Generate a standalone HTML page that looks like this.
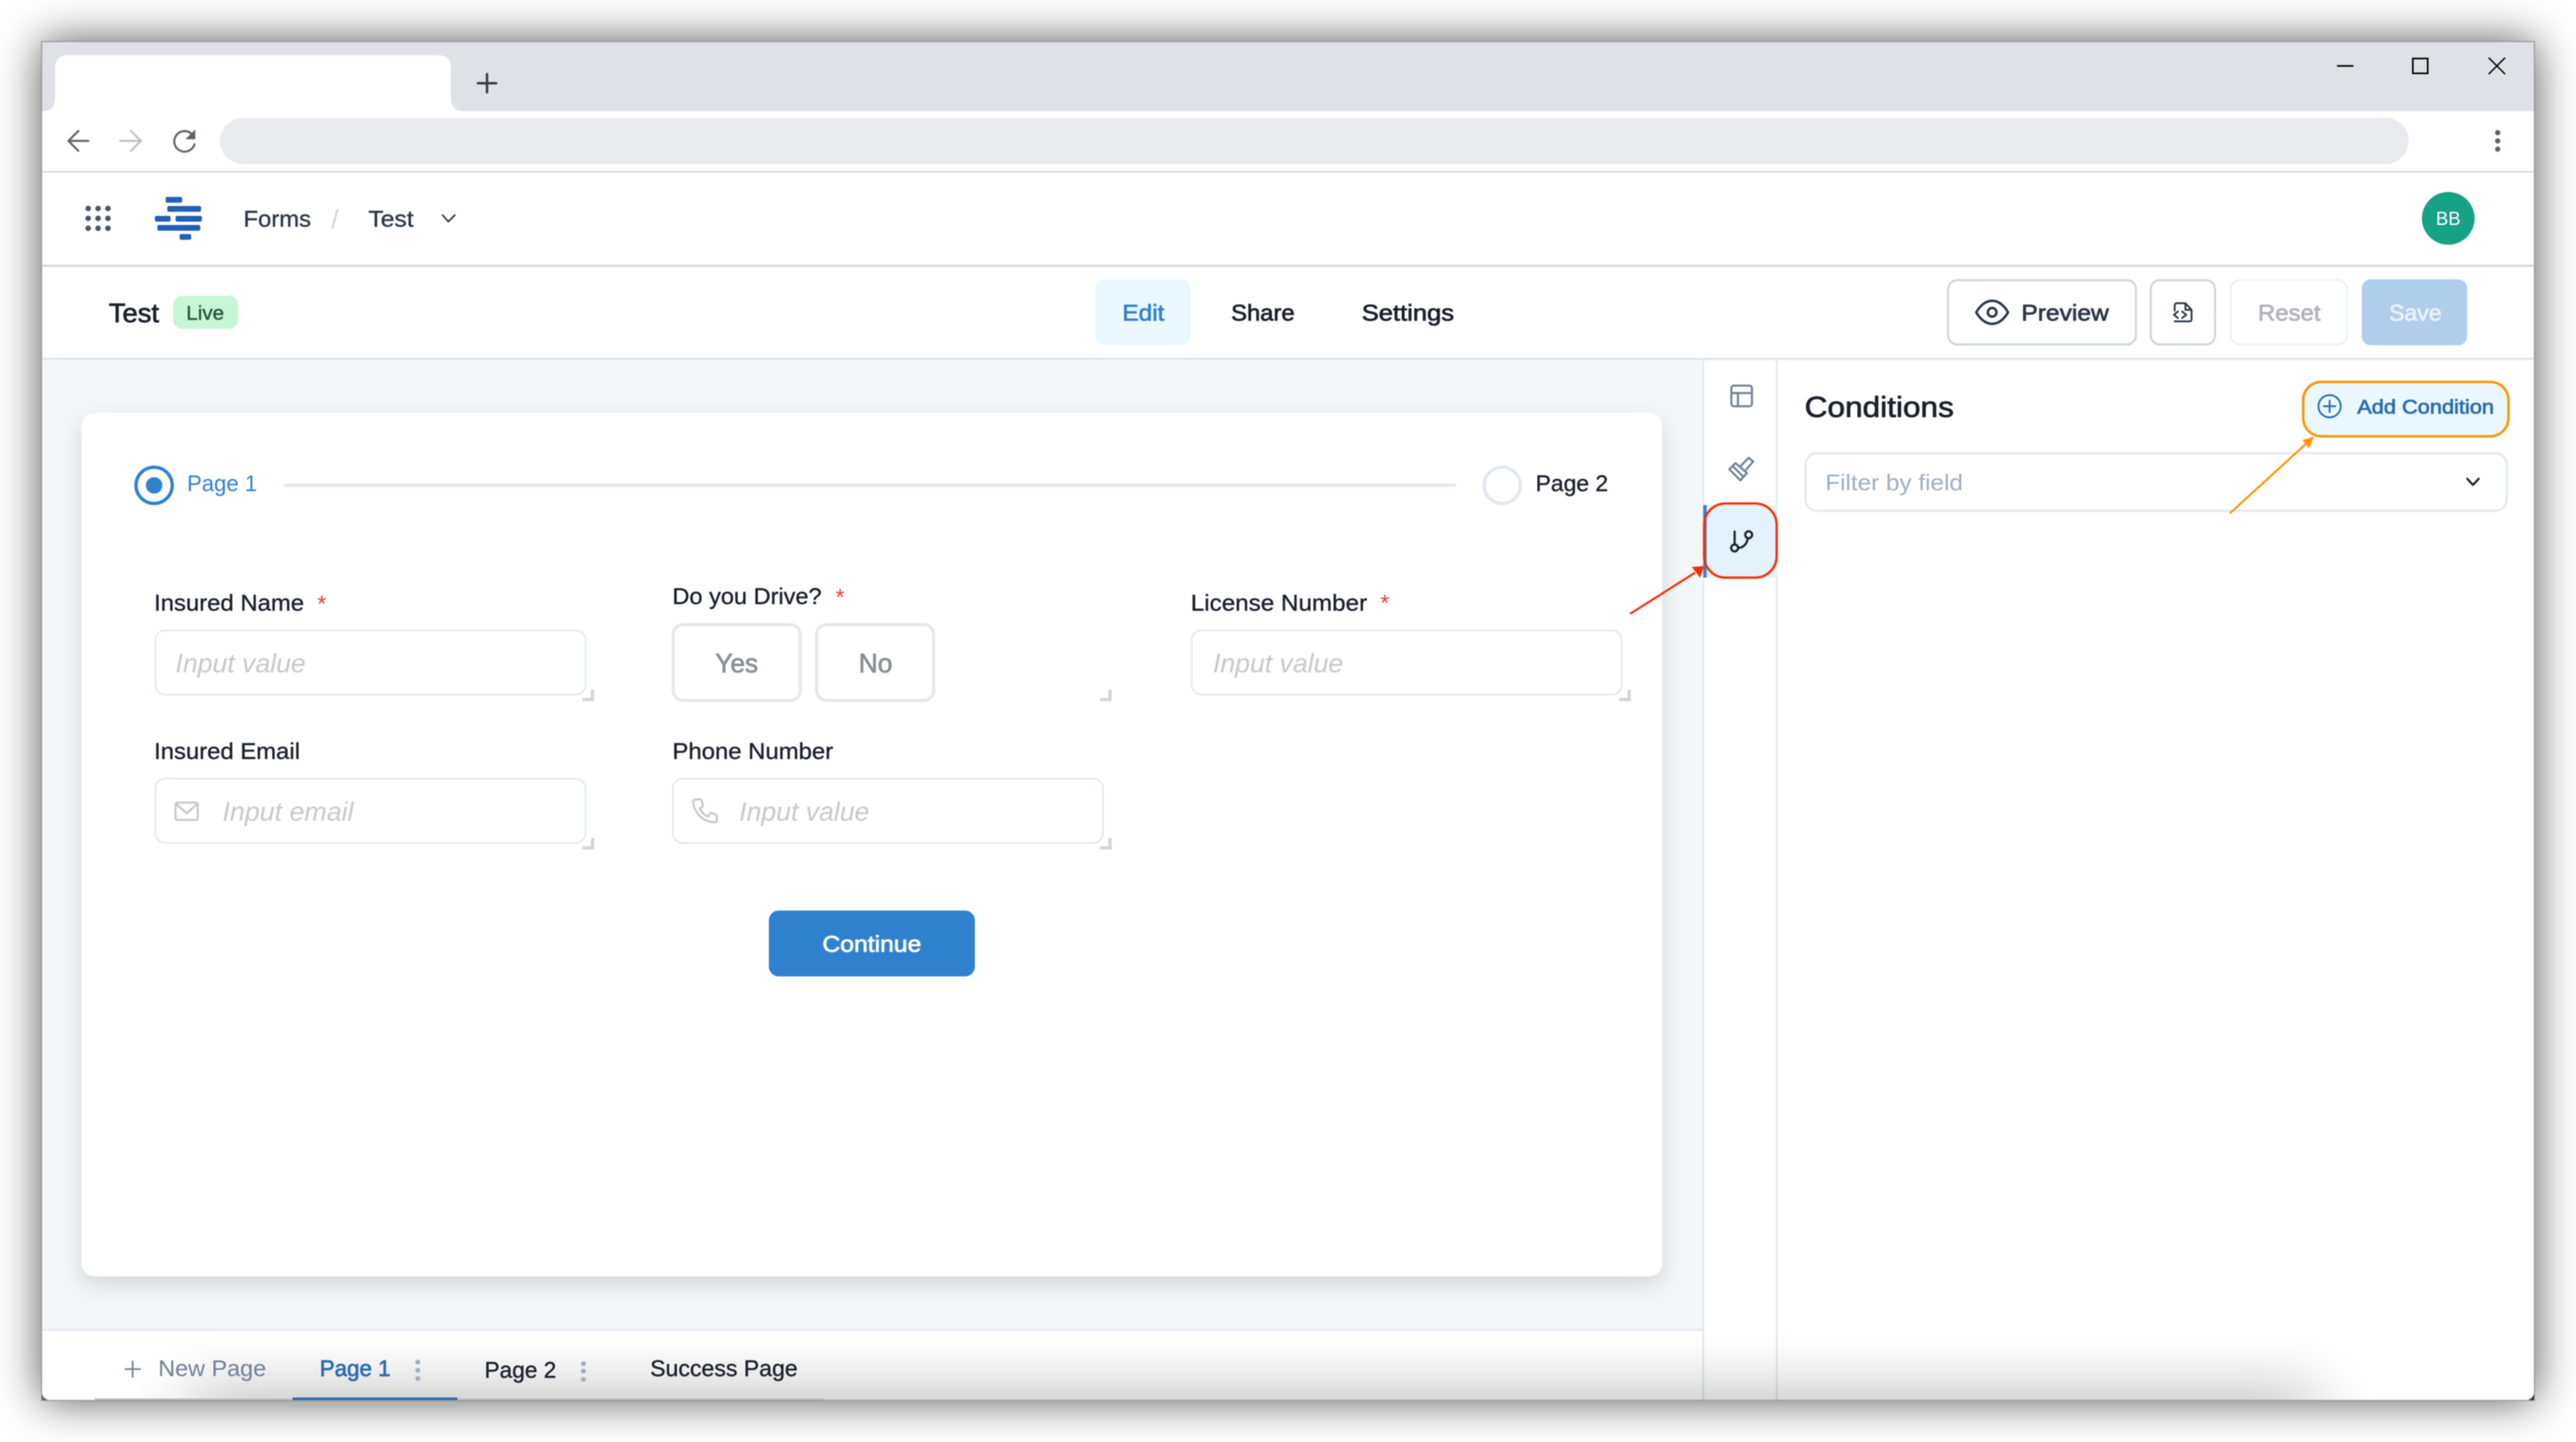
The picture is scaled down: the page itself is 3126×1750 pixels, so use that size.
<!DOCTYPE html>
<html lang="en">
<head>
<meta charset="utf-8">
<title>Forms - Conditions</title>
<style>
html,body{margin:0;padding:0;width:3126px;height:1750px;background:#fff;overflow:hidden}
.win{position:absolute;left:50px;top:50px;width:3026px;height:1650px;box-shadow:0 0 50px rgba(0,0,0,.66)}
svg{position:absolute;left:0;top:0;filter:blur(.4px)}
text{font-family:"Liberation Sans",Arial,sans-serif;fill:currentColor;stroke:currentColor;stroke-width:0}
.m{stroke-width:.4px}
.s{stroke-width:.8px}
.ph{font-style:italic;font-size:32px;color:#c9c9c9}
.i{fill:none;stroke-linecap:round;stroke-linejoin:round}
</style>
</head>
<body>
<div class="win"></div>
<svg width="3126" height="1750" viewBox="0 0 3126 1750" xmlns="http://www.w3.org/2000/svg">
<defs>
<filter id="sb" x="-10%" y="-400%" width="120%" height="900%"><feGaussianBlur stdDeviation="40"/></filter>
<filter id="cs" x="-5%" y="-5%" width="110%" height="110%"><feGaussianBlur stdDeviation="14"/></filter>
<clipPath id="wc"><rect x="51" y="51" width="3024" height="1648"/></clipPath>
</defs>

<!-- window base -->
<rect x="50" y="50" width="3026" height="1650" fill="#fff"/>

<!-- tab strip -->
<rect x="51" y="51" width="3024" height="84" fill="#dee1e6"/>
<path d="M51 135Q67 135 67 119V83Q67 67 83 67H531Q547 67 547 83V119Q547 135 563 135Z" fill="#fff"/>
<path class="i" d="M591 90V112M580 101H602" stroke="#3c4043" stroke-width="3"/>
<path d="M2836 80H2856" stroke="#000" stroke-width="2"/>
<rect x="2928" y="71" width="18" height="18" fill="none" stroke="#000" stroke-width="2"/>
<path d="M3020 70L3040 90M3040 70L3020 90" stroke="#000" stroke-width="1.6"/>

<!-- browser toolbar -->
<rect x="267" y="143" width="2656" height="56" rx="28" fill="#e8eaed"/>
<path class="i" d="M107 171H84M95 159L83 171L95 183" stroke="#5f6368" stroke-width="2.5"/>
<path class="i" d="M146 171H170M159 159L171 171L159 183" stroke="#bdc1c6" stroke-width="2.5"/>
<path class="i" d="M232 162A12.5 12.500 0 1 0 236 175" stroke="#5f6368" stroke-width="2.5"/>
<path d="M237 157V169H225Z" fill="#5f6368"/>
<circle cx="3031" cy="161" r="3.2" fill="#5f6368"/><circle cx="3031" cy="171" r="3.2" fill="#5f6368"/><circle cx="3031" cy="181" r="3.2" fill="#5f6368"/>
<rect x="51" y="208" width="3024" height="1" fill="#b4b4b4"/>

<!-- app header -->
<g fill="#4a5568">
<circle cx="107" cy="253" r="3.4"/><circle cx="119" cy="253" r="3.4"/><circle cx="131" cy="253" r="3.4"/>
<circle cx="107" cy="265" r="3.4"/><circle cx="119" cy="265" r="3.4"/><circle cx="131" cy="265" r="3.4"/>
<circle cx="107" cy="277" r="3.4"/><circle cx="119" cy="277" r="3.4"/><circle cx="131" cy="277" r="3.4"/>
</g>
<g fill="#2260b4">
<rect x="201" y="239" width="20" height="7" rx="2"/>
<rect x="203" y="250" width="41" height="7" rx="2"/>
<rect x="188" y="262" width="19" height="7" rx="2"/>
<rect x="213" y="262" width="32" height="7" rx="2"/>
<rect x="191" y="273" width="52" height="7" rx="2"/>
<rect x="218" y="284" width="14" height="7" rx="2"/>
</g>
<text x="295.500" y="275" font-size="28" textLength="82" lengthAdjust="spacingAndGlyphs" class="m" color="#2d3748">Forms</text>
<text x="402" y="277" font-size="32" color="#cbd5e0">/</text>
<text x="447" y="275" font-size="28" textLength="55" lengthAdjust="spacingAndGlyphs" class="m" color="#2d3748">Test</text>
<path class="i" d="M537 261L544 269L552 261" stroke="#2d3748" stroke-width="2"/>
<circle cx="2971" cy="265" r="32" fill="#17a185"/>
<text x="2956" y="273" font-size="23" textLength="30" lengthAdjust="spacingAndGlyphs" color="#fff">BB</text>
<rect x="51" y="321" width="3024" height="3" fill="#d5dae3"/>

<!-- form toolbar -->
<text x="132" y="391" font-size="32" textLength="61" lengthAdjust="spacingAndGlyphs" class="s" color="#1a202c">Test</text>
<rect x="210" y="359" width="79" height="40" rx="11" fill="#c6f6d5"/>
<text x="226" y="388" font-size="24" textLength="46" lengthAdjust="spacingAndGlyphs" class="m" color="#22543d">Live</text>
<rect x="1329" y="339" width="116" height="80" rx="12" fill="#ebf8ff"/>
<text x="1362" y="389" font-size="28" textLength="51" lengthAdjust="spacingAndGlyphs" class="s" color="#3182ce">Edit</text>
<text x="1494" y="389" font-size="28" textLength="77" lengthAdjust="spacingAndGlyphs" class="s" color="#1a202c">Share</text>
<text x="1652.500" y="389" font-size="28" textLength="112" lengthAdjust="spacingAndGlyphs" class="s" color="#1a202c">Settings</text>

<rect x="2364" y="340" width="228" height="78" rx="11" fill="#fff" stroke="#cbd5e0" stroke-width="2.5"/>
<g transform="translate(2396.5 358) scale(1.75)" class="i" stroke="#2d3748" stroke-width="1.75"><path d="M1 12s4-8 11-8 11 8 11 8-4 8-11 8-11-8-11-8z"/><circle cx="12" cy="12" r="3"/></g>
<text x="2453" y="389" font-size="28" textLength="106" lengthAdjust="spacingAndGlyphs" class="s" color="#2d3748">Preview</text>
<rect x="2610" y="340" width="78" height="78" rx="11" fill="#fff" stroke="#cbd5e0" stroke-width="2.5"/>
<path class="i" stroke="#2d3748" stroke-width="2.2" d="M2639 377V371Q2639 368 2642 368H2652L2659.5 376V387Q2659.5 390 2657 390H2639M2652 368V376H2659.5M2643 378L2638 382L2643 386M2648 378L2653 382L2648 386"/>
<rect x="2707" y="340" width="141" height="78" rx="11" fill="#fff" stroke="#edf2f7" stroke-width="2.5"/>
<text x="2740" y="389" font-size="28" textLength="76" lengthAdjust="spacingAndGlyphs" class="s" color="#b0b3bb">Reset</text>
<rect x="2866" y="339" width="128" height="80" rx="11" fill="#b0cdeb"/>
<text x="2899" y="389" font-size="28" textLength="64" lengthAdjust="spacingAndGlyphs" class="s" color="#eaf2fb">Save</text>
<rect x="51" y="434" width="3024" height="3" fill="#e2e8f0"/>

<!-- canvas -->
<rect x="51" y="437" width="2015" height="1176" fill="#f4f7fa"/>
<rect x="99" y="512" width="1918" height="1048" rx="16" fill="#000" opacity=".13" filter="url(#cs)"/>
<rect x="99" y="501" width="1918" height="1048" rx="16" fill="#fff"/>

<!-- stepper -->
<circle cx="187" cy="589" r="22" fill="#fff" stroke="#3182ce" stroke-width="4"/>
<circle cx="187" cy="589" r="10" fill="#3182ce"/>
<text x="227" y="596" font-size="28" textLength="85" lengthAdjust="spacingAndGlyphs" color="#3182ce">Page 1</text>
<rect x="345" y="587" width="1422" height="4" fill="#e2e8f0"/>
<circle cx="1823" cy="589" r="22" fill="#fff" stroke="#e2e8f0" stroke-width="4"/>
<text x="1863.500" y="596" font-size="28" textLength="88" lengthAdjust="spacingAndGlyphs" class="m" color="#1a202c">Page 2</text>

<!-- fields -->
<text x="187" y="741" font-size="28" textLength="182" lengthAdjust="spacingAndGlyphs" class="m" color="#1a202c">Insured Name</text>
<text x="385" y="742" font-size="28" color="#e53e3e">*</text>
<rect x="188.500" y="765" width="522" height="78" rx="12" fill="#fff" stroke="#e2e8f0" stroke-width="2"/>
<text x="213" y="816" textLength="158" lengthAdjust="spacingAndGlyphs" class="ph">Input value</text>
<path d="M719 837V849H707" fill="none" stroke="#d5d5d5" stroke-width="4"/>

<text x="816" y="733" font-size="28" textLength="181" lengthAdjust="spacingAndGlyphs" class="m" color="#1a202c">Do you Drive?</text>
<text x="1014" y="734" font-size="28" color="#e53e3e">*</text>
<rect x="817" y="758" width="154" height="92" rx="12" fill="#fff" stroke="#e8e8e8" stroke-width="4"/>
<text x="868" y="816" font-size="32" textLength="52" lengthAdjust="spacingAndGlyphs" class="s" color="#8c8e94">Yes</text>
<rect x="991" y="758" width="142" height="92" rx="12" fill="#fff" stroke="#e8e8e8" stroke-width="4"/>
<text x="1042" y="816" font-size="32" textLength="41" lengthAdjust="spacingAndGlyphs" class="s" color="#8c8e94">No</text>
<path d="M1347 837V849H1335" fill="none" stroke="#d5d5d5" stroke-width="4"/>

<text x="1445" y="741" font-size="28" textLength="214" lengthAdjust="spacingAndGlyphs" class="m" color="#1a202c">License Number</text>
<text x="1675" y="741" font-size="28" color="#e53e3e">*</text>
<rect x="1446" y="765" width="522" height="78" rx="12" fill="#fff" stroke="#e2e8f0" stroke-width="2"/>
<text x="1472" y="816" textLength="158" lengthAdjust="spacingAndGlyphs" class="ph">Input value</text>
<path d="M1977 837V849H1965" fill="none" stroke="#d5d5d5" stroke-width="4"/>

<text x="187" y="921" font-size="28" textLength="177" lengthAdjust="spacingAndGlyphs" class="m" color="#1a202c">Insured Email</text>
<rect x="188.500" y="945" width="522" height="78" rx="12" fill="#fff" stroke="#e2e8f0" stroke-width="2"/>
<rect x="213" y="974" width="27" height="21" rx="2" fill="none" stroke="#c8c8c8" stroke-width="2.5"/>
<path class="i" d="M214 976L226.5 987L239 976" stroke="#c8c8c8" stroke-width="2.5"/>
<text x="270" y="996" textLength="159" lengthAdjust="spacingAndGlyphs" class="ph">Input email</text>
<path d="M719 1017V1029H707" fill="none" stroke="#d5d5d5" stroke-width="4"/>

<text x="816" y="921" font-size="28" textLength="195" lengthAdjust="spacingAndGlyphs" class="m" color="#1a202c">Phone Number</text>
<rect x="816.500" y="945" width="522" height="78" rx="12" fill="#fff" stroke="#e2e8f0" stroke-width="2"/>
<path class="i" stroke="#c8c8c8" stroke-width="2.5" d="M845 970L849 970Q851 970 851.5 972L853 977Q853.5 979 851 980L849 981Q852 988 859 991L861 988Q862 986 864 987L868 988Q870 989 870 991L870 995Q870 998 867 998Q855 997 848 989Q842 982 841 974Q841 970 845 970Z"/>
<text x="897" y="996" textLength="158" lengthAdjust="spacingAndGlyphs" class="ph">Input value</text>
<path d="M1347 1017V1029H1335" fill="none" stroke="#d5d5d5" stroke-width="4"/>

<rect x="933" y="1105" width="250" height="80" rx="12" fill="#3182ce"/>
<text x="998" y="1155" font-size="28" textLength="120" lengthAdjust="spacingAndGlyphs" class="s" color="#fff">Continue</text>

<!-- bottom bar -->
<rect x="51" y="1615" width="2015" height="85" fill="#fff"/>
<rect x="51" y="1613" width="2015" height="2" fill="#e2e8f0"/>

<!-- tool rail -->
<rect x="2066" y="437" width="2" height="1263" fill="#e2e8f0"/>
<rect x="2155" y="437" width="2" height="1263" fill="#e2e8f0"/>
<rect x="2101" y="468" width="25" height="25" rx="3" fill="none" stroke="#718096" stroke-width="2.5"/>
<path d="M2101 477H2126M2109 477V493" stroke="#718096" stroke-width="2.5" fill="none"/>
<g class="i" stroke="#718096" stroke-width="2.5">
<path d="M2106 562L2120 574L2112 583L2098.500 569.500Z"/>
<path d="M2113 565L2122 555.500L2127.500 560L2119 570"/>
<path d="M2104 567L2115 578"/>
</g>
<rect x="2068" y="613" width="89" height="88" fill="#e3f2fb"/>
<rect x="2067" y="613" width="4" height="88" fill="#3182ce"/>
<rect x="2068" y="611" width="88" height="90" rx="26" fill="none" stroke="#ff2a00" stroke-width="2.8"/>
<g class="i" stroke="#1a202c" stroke-width="2.6">
<path d="M2105 645V660"/>
<circle cx="2105" cy="665" r="4.2"/>
<circle cx="2122" cy="649" r="4.2"/>
<path d="M2121 653.5Q2119 664 2109.5 665"/>
</g>

<!-- conditions panel -->
<text x="2190" y="506" font-size="35" textLength="181" lengthAdjust="spacingAndGlyphs" class="s" color="#1a202c">Conditions</text>
<rect x="2794" y="462" width="251" height="66" rx="20" fill="#ebf8ff"/>
<rect x="2795" y="463.500" width="249" height="66" rx="22" fill="none" stroke="#ff9500" stroke-width="3"/>
<circle cx="2827" cy="493" r="13.5" fill="none" stroke="#2b6cb0" stroke-width="2.2"/>
<path class="i" d="M2827 486V500M2820 493H2834" stroke="#2b6cb0" stroke-width="2.2"/>
<text x="2860.500" y="502" font-size="24" textLength="166" lengthAdjust="spacingAndGlyphs" class="s" color="#2b6cb0">Add Condition</text>
<rect x="2191" y="550" width="851" height="70" rx="14" fill="#fff" stroke="#e2e8f0" stroke-width="2.5"/>
<text x="2215" y="595" font-size="28" textLength="167" lengthAdjust="spacingAndGlyphs" color="#a0aec0">Filter by field</text>
<path class="i" d="M2994 581L3001 588.500L3008 581" stroke="#1a202c" stroke-width="2.5"/>

<!-- bottom glow -->
<g clip-path="url(#wc)"><rect x="230" y="1700" width="2580" height="45" fill="#000" opacity=".42" filter="url(#sb)"/></g>

<!-- bottom tabs -->
<path class="i" d="M161 1652V1671M152 1661.500H170" stroke="#718096" stroke-width="2"/>
<text x="192" y="1670" font-size="28" textLength="131" lengthAdjust="spacingAndGlyphs" color="#718096">New Page</text>
<text x="388" y="1670" font-size="28" textLength="86" lengthAdjust="spacingAndGlyphs" class="s" color="#2b6cb0">Page 1</text>
<circle cx="507" cy="1653" r="3" fill="#a0aec0"/><circle cx="507" cy="1663" r="3" fill="#a0aec0"/><circle cx="507" cy="1673" r="3" fill="#a0aec0"/>
<text x="588" y="1672" font-size="28" textLength="87" lengthAdjust="spacingAndGlyphs" class="m" color="#1a202c">Page 2</text>
<circle cx="708" cy="1655" r="3" fill="#a0aec0"/><circle cx="708" cy="1664" r="3" fill="#a0aec0"/><circle cx="708" cy="1674" r="3" fill="#a0aec0"/>
<text x="789" y="1670" font-size="28" textLength="179" lengthAdjust="spacingAndGlyphs" class="m" color="#1a202c">Success Page</text>
<rect x="115" y="1697" width="885" height="2" fill="#c0c6d0"/>
<rect x="355" y="1696" width="200" height="3" fill="#2b6cb0"/>

<!-- arrows -->
<path d="M1978 745L2057 695" stroke="#ff2a00" stroke-width="2.5" fill="none"/>
<path d="M2068 687L2053 688L2063 701Z" fill="#ff2a00"/>
<path d="M2706 623L2799 538" stroke="#ff9500" stroke-width="2.5" fill="none"/>
<path d="M2808 530L2794 534L2802 544Z" fill="#ff9500"/>

<!-- window frame -->
<path d="M3076 1687V1700H3063Q3075 1699 3076 1687Z" fill="#2e383d"/>
<path d="M50 1687V1700H63Q51 1699 50 1687Z" fill="#666"/>
<rect x="50.500" y="50.500" width="3025" height="1649" fill="none" stroke="#7d7d7d" stroke-width="1"/>
</svg>
</body>
</html>
